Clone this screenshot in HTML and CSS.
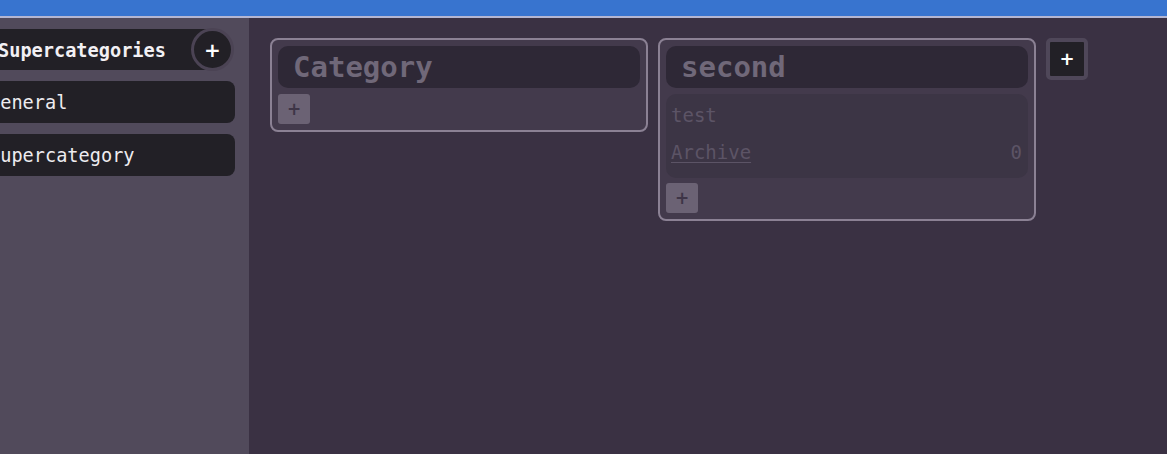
FILE: index.html
```html
<!DOCTYPE html>
<html>
<head>
<meta charset="utf-8">
<link rel="stylesheet" href="styles.css">
</head>
<body>
<div class="topbar"></div>
<div class="app">
  <aside class="sidebar">
    <div class="side-inner">
      <div class="side-head">
        <span class="side-title">Supercategories</span>
        <button class="round-add">+</button>
      </div>
      <div class="side-item">General</div>
      <div class="side-item">Supercategory</div>
    </div>
  </aside>
  <main class="board">
    <section class="card">
      <div class="card-head">Category</div>
      <button class="card-add">+</button>
    </section>
    <section class="card">
      <div class="card-head">second</div>
      <div class="card-list">
        <div class="row">test</div>
        <div class="row"><a class="link">Archive</a><span class="count">0</span></div>
      </div>
      <button class="card-add card-add-tight">+</button>
    </section>
    <button class="board-add">+</button>
  </main>
</div>
</body>
</html>
```

FILE: styles.css
```css
* { box-sizing: border-box; }
html, body { margin: 0; padding: 0; height: 100%; }
body {
  background: #3a3143;
  font-family: "DejaVu Sans Mono", "Liberation Mono", monospace;
  overflow: hidden;
}
.topbar {
  background: #3874cf;
  border-bottom: 2px solid #b4b6d2;
  height: 18px;
}
.app {
  display: flex;
  height: calc(100% - 18px);
}
.sidebar {
  width: 249px;
  flex: none;
  background: #514a5b;
  overflow: hidden;
}
.side-inner {
  margin-left: -20px;
  width: 255px;
  padding-top: 11px;
  display: flex;
  flex-direction: column;
  gap: 11px;
}
.side-head {
  position: relative;
  height: 41px;
  background: #222026;
  border-radius: 0 22px 22px 0;
  width: 251px;
  display: flex;
  align-items: center;
  padding-left: 18px;
  padding-top: 1px;
}
.side-title {
  color: #f2f0f4;
  font-weight: bold;
  font-size: 18.6px;
}
.round-add {
  position: absolute;
  right: -3px;
  top: -1px;
  width: 43px;
  height: 43px;
  border-radius: 50%;
  background: #222026;
  border: 3px solid #4b4354;
  color: #ffffff;
  font-family: "DejaVu Sans", sans-serif;
  font-weight: bold;
  font-size: 20px;
  line-height: 1;
  padding: 0;
}
.side-item {
  height: 42px;
  background: #222026;
  border-radius: 8px;
  width: 255px;
  color: #eeecf0;
  font-size: 18.6px;
  display: flex;
  align-items: center;
  padding-left: 9px;
}
.board {
  flex: 1;
  display: flex;
  align-items: flex-start;
  gap: 10px;
  padding: 20px 0 0 21px;
}
.card {
  width: 378px;
  background: #433a4c;
  border: 2px solid #8b8194;
  border-radius: 8px;
  padding: 6px;
  display: flex;
  flex-direction: column;
  gap: 6px;
}
.card-head {
  height: 42px;
  background: #2e2836;
  border-radius: 10px;
  color: #706879;
  font-weight: bold;
  font-size: 29px;
  display: flex;
  align-items: center;
  padding-left: 15px;
}
.card-list {
  background: #3c3545;
  border-radius: 10px;
  padding: 2px 5px 8px 5px;
  display: flex;
  flex-direction: column;
}
.row {
  height: 37px;
  display: flex;
  align-items: center;
  justify-content: space-between;
  color: #5c5466;
  font-size: 19px;
}
.link {
  text-decoration: underline;
  text-underline-offset: 3px;
  color: #5c5466;
}
.count { margin-right: 1px; }
.card-add {
  width: 32px;
  height: 30px;
  background: #6b6274;
  border: none;
  border-radius: 3px;
  color: #3e3547;
  font-family: "DejaVu Sans", sans-serif;
  font-weight: bold;
  font-size: 17px;
  padding: 0;
  line-height: 1;
}
.card-add-tight { margin-top: -1px; }
.board-add {
  width: 42px;
  height: 42px;
  background: #222026;
  border: 4px solid #4f4759;
  border-radius: 5px;
  color: #ffffff;
  font-family: "DejaVu Sans", sans-serif;
  font-weight: bold;
  font-size: 18px;
  padding: 0;
  line-height: 1;
}
```
